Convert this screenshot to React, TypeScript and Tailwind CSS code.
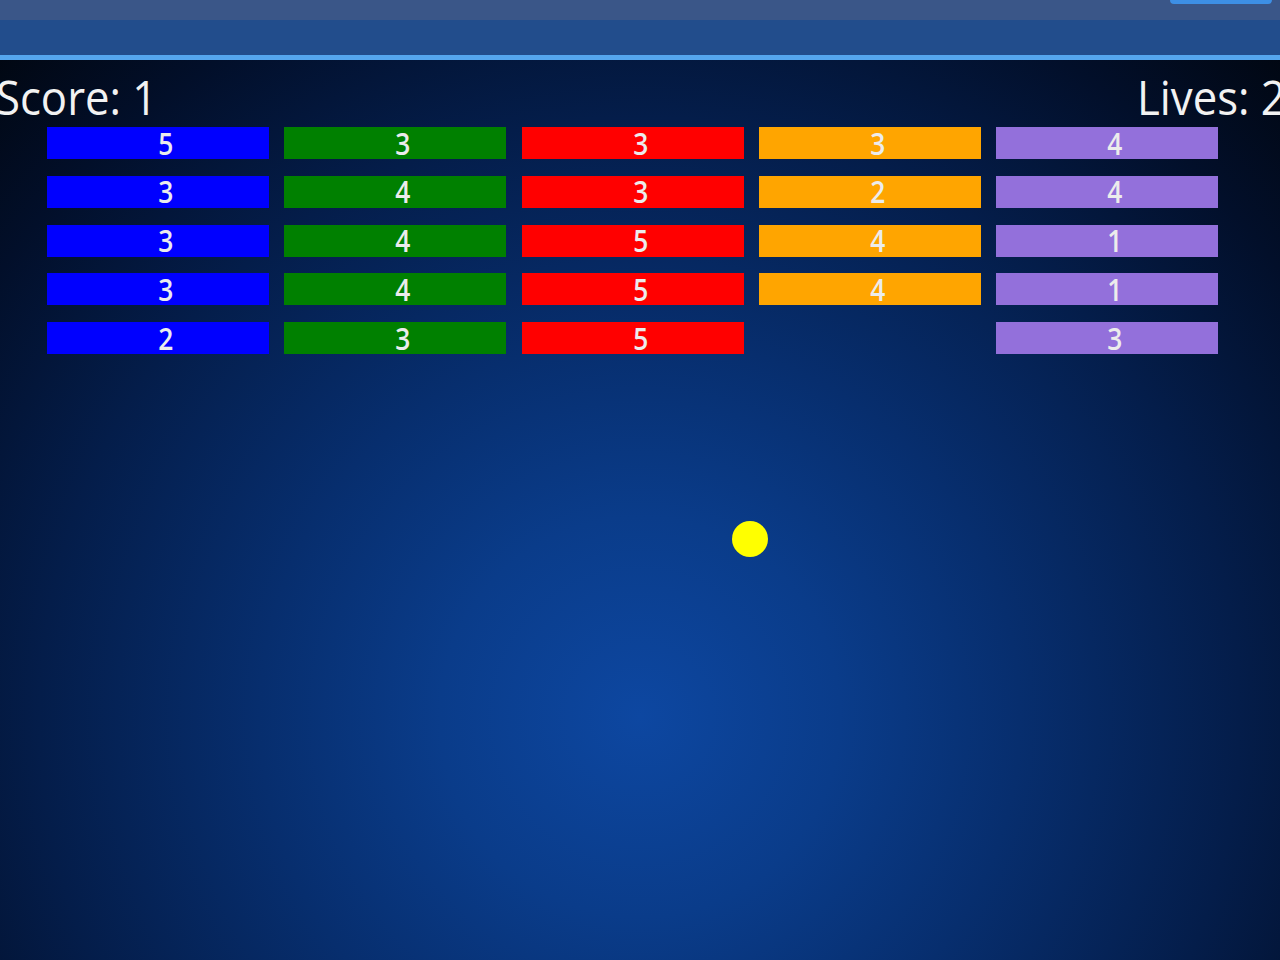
import React from 'react'

const colors = ['bg-[#0000ff]', 'bg-[#008000]', 'bg-[#ff0000]', 'bg-[#ffa500]', 'bg-[#9370db]']

// hits left per brick, row by row (null = already broken)
const rows: (number | null)[][] = [
  [5, 3, 3, 3, 4],
  [3, 4, 3, 2, 4],
  [3, 4, 5, 4, 1],
  [3, 4, 5, 4, 1],
  [2, 3, 5, null, 3],
]

export default function App() {
  return (
    <main className="w-[1280px] h-[960px] overflow-hidden flex flex-col bg-black" style={{ fontFamily: '"Open Sans", "Noto Sans", sans-serif' }}>
      {/* Header */}
      <header className="relative shrink-0">
        <div className="h-5 bg-[#3a5688]" />
        <div className="h-[35px] bg-[#224d8c]" />
        <div className="h-[5px] bg-[#55a6ee]" />
        <div className="absolute right-2 top-0 w-[102px] h-1 rounded-b-full bg-[#3d8fe5]" />
      </header>

      {/* Game canvas */}
      <section className="relative flex-1 flex flex-col bg-[radial-gradient(circle_at_50%_73%,#0d47a1_0px,#0a3c8a_200px,#072e6e_380px,#041d4a_600px,#020f2a_780px,#01060f_940px)]">
        <div className="h-[67px] flex items-end text-[#f2f2f2] text-[48px] font-medium leading-none pb-[6px]">
          <span className="-ml-[4px] scale-x-[0.91] origin-left inline-block whitespace-nowrap">Score: 1</span>
          <span className="ml-auto w-[143px] scale-x-[0.91] origin-left inline-block whitespace-nowrap">Lives: 2</span>
        </div>

        <div className="ml-[47px] grid grid-cols-[repeat(5,222px)] gap-x-[15.25px] gap-y-[16.75px]">
          {rows.flatMap((row, r) =>
            row.map((hits, c) =>
              hits === null ? (
                <div key={`${r}-${c}`} className="h-8" />
              ) : (
                <div key={`${r}-${c}`} className={`h-8 flex items-center justify-center pl-4 ${colors[c]}`}>
                  <span className="inline-block scale-x-[0.85] text-[31px] font-semibold leading-none text-[#ececec]">{hits}</span>
                </div>
              )
            )
          )}
        </div>

        {/* Ball */}
        <div className="absolute left-[732px] top-[461px] w-9 h-9 rounded-full bg-[#ffff00]" />
      </section>
    </main>
  )
}
